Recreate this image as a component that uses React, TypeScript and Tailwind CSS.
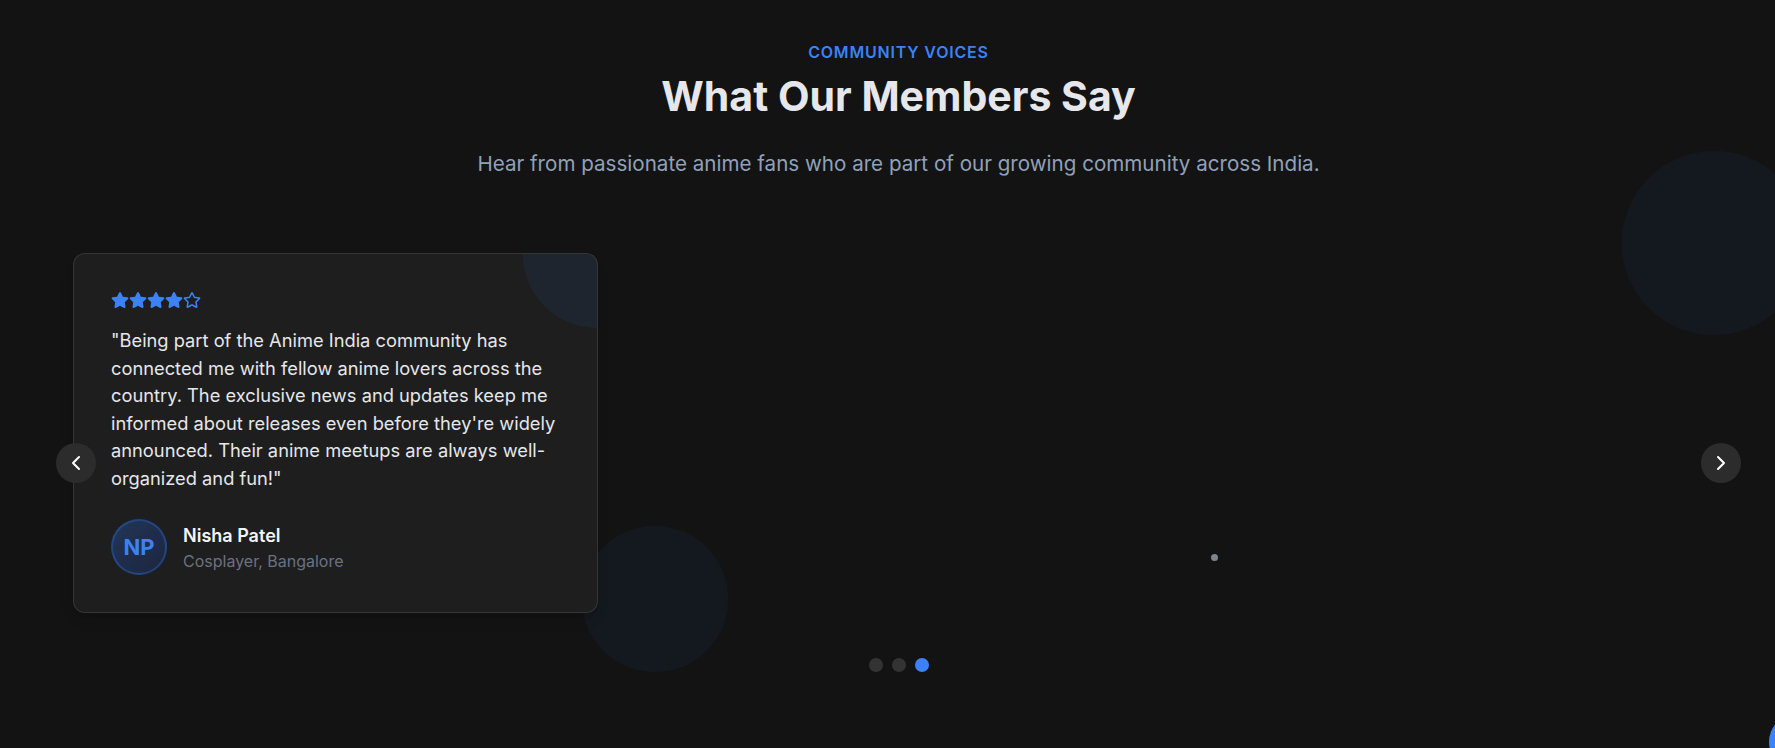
import { ChevronLeft, ChevronRight } from "lucide-react";
import { FaStar, FaRegStar } from "react-icons/fa";

const testimonial = {
  rating: 4,
  quote:
    "\"Being part of the Anime India community has connected me with fellow anime lovers across the country. The exclusive news and updates keep me informed about releases even before they're widely announced. Their anime meetups are always well-organized and fun!\"",
  name: "Nisha Patel",
  role: "Cosplayer, Bangalore",
  initials: "NP",
};

const Stars = ({ rating }: { rating: number }) => (
  <div className="flex items-center text-[#3b82f6]">
    {[1, 2, 3, 4, 5].map((i) =>
      i <= rating ? <FaStar key={i} size={18} /> : <FaRegStar key={i} size={18} />
    )}
  </div>
);

const TestimonialCard = () => (
  <div className="relative w-[525px] overflow-hidden rounded-xl border border-white/10 bg-[#1e1e1e] px-[37px] pt-[37px] pb-[37px] shadow-lg">
    <div className="absolute -top-[74px] -right-[74px] h-[148px] w-[148px] rounded-full bg-blue-500/[0.07]" />
    <div className="relative">
      <Stars rating={testimonial.rating} />
      <p className="mt-[18px] text-[18.3px] leading-[27.5px] text-gray-200">{testimonial.quote}</p>
      <div className="mt-[27px] flex items-center gap-4">
        <div className="flex h-14 w-14 items-center justify-center rounded-full border-2 border-blue-500/30 bg-gradient-to-br from-blue-500/25 to-blue-900/30">
          <span className="text-[22px] font-bold text-[#3b82f6]">{testimonial.initials}</span>
        </div>
        <div>
          <h4 className="text-lg leading-7 font-semibold text-gray-100">{testimonial.name}</h4>
          <p className="text-base leading-[22px] text-gray-500">{testimonial.role}</p>
        </div>
      </div>
    </div>
  </div>
);

export default function App() {
  return (
    <div className="w-full overflow-hidden bg-[#131313]" style={{ fontFamily: "Inter, 'Noto Sans', sans-serif" }}>
      <section className="relative h-[748px] w-[1797px] pt-10">
        {/* background blobs */}
        <div className="absolute left-[1622px] top-[151px] h-[184px] w-[184px] rounded-full bg-blue-500/5" />
        <div className="absolute left-[582px] top-[526px] h-[146px] w-[146px] rounded-full bg-blue-500/5" />
        <div className="absolute left-[1211px] top-[554px] h-[7px] w-[7px] rounded-full bg-gray-400/80" />

        <div className="relative text-center">
          <p className="text-base leading-6 font-semibold tracking-wider text-[#3b82f6] uppercase">Community Voices</p>
          <h2 className="mt-2 text-[41px] leading-[48px] font-bold text-gray-200">What Our Members Say</h2>
          <p className="mt-[30px] text-[20.6px] leading-7 text-slate-400">
            Hear from passionate anime fans who are part of our growing community across India.
          </p>
        </div>

        <div className="relative mx-auto mt-[75px] w-[1685px]">
          <div className="flex pl-[17px]">
            <TestimonialCard />
          </div>
          <div className="mt-[45px] flex justify-center gap-[9px]">
            <button className="h-3.5 w-3.5 rounded-full bg-[#333333]" />
            <button className="h-3.5 w-3.5 rounded-full bg-[#333333]" />
            <button className="h-3.5 w-3.5 rounded-full bg-[#3b82f6]" />
          </div>
          <button className="absolute left-0 top-1/2 flex h-10 w-10 -translate-y-1/2 items-center justify-center rounded-full bg-[#2c2c2c] text-white">
            <ChevronLeft size={24} strokeWidth={2} />
          </button>
          <button className="absolute right-0 top-1/2 flex h-10 w-10 -translate-y-1/2 items-center justify-center rounded-full bg-[#2c2c2c] text-white">
            <ChevronRight size={24} strokeWidth={2} />
          </button>
        </div>

        <button className="absolute left-[1769px] top-[714px] h-14 w-14 rounded-full bg-[#3b82f6]" />
      </section>
    </div>
  );
}
